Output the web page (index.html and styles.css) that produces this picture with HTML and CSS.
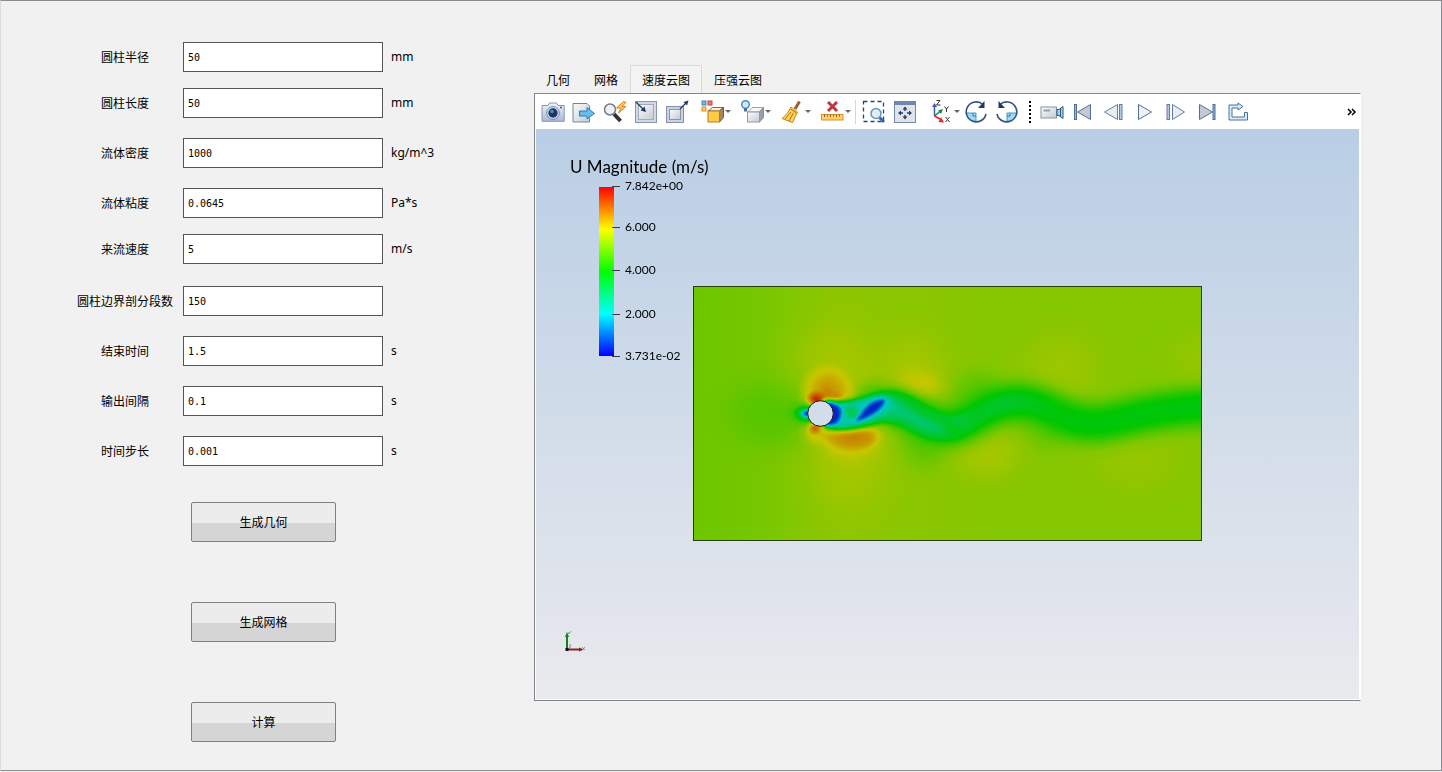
FILE: index.html
```html
<!DOCTYPE html>
<html lang="zh-CN">
<head>
<meta charset="utf-8">
<title>圆柱绕流</title>
<link rel="stylesheet" href="styles.css">
</head>
<body>
<div class="window">
  <form class="params">
    <div class="row"><label for="radius">圆柱半径</label><input id="radius" type="text" value="50"><span class="unit">mm</span></div>
    <div class="row row-near"><label for="length">圆柱长度</label><input id="length" type="text" value="50"><span class="unit">mm</span></div>
    <div class="row"><label for="density">流体密度</label><input id="density" type="text" value="1000"><span class="unit">kg/m^3</span></div>
    <div class="row"><label for="viscosity">流体粘度</label><input id="viscosity" type="text" value="0.0645"><span class="unit">Pa*s</span></div>
    <div class="row row-near"><label for="speed">来流速度</label><input id="speed" type="text" value="5"><span class="unit">m/s</span></div>
    <div class="row row-far"><label for="segments">圆柱边界剖分段数</label><input id="segments" type="text" value="150"></div>
    <div class="row"><label for="end">结束时间</label><input id="end" type="text" value="1.5"><span class="unit">s</span></div>
    <div class="row"><label for="interval">输出间隔</label><input id="interval" type="text" value="0.1"><span class="unit">s</span></div>
    <div class="row"><label for="step">时间步长</label><input id="step" type="text" value="0.001"><span class="unit">s</span></div>
    <div class="actions">
      <button type="button" class="action">生成几何</button>
      <button type="button" class="action">生成网格</button>
      <button type="button" class="action">计算</button>
    </div>
  </form>

  <main class="results">
    <div class="tabs" role="tablist">
      <button type="button" class="tab" role="tab">几何</button>
      <button type="button" class="tab" role="tab">网格</button>
      <button type="button" class="tab tab-active" role="tab" aria-selected="true">速度云图</button>
      <button type="button" class="tab" role="tab">压强云图</button>
    </div>
    <section class="panel">
      <div class="toolbar" role="toolbar">
        <button type="button" class="tool" aria-label="截图"><svg viewBox="0 0 24 24"><defs><linearGradient id="steel" x2="0" y2="1"><stop stop-color="#eef2f8"/><stop offset="1" stop-color="#a9b9d4"/></linearGradient><linearGradient id="silver" x2="1" y2="1"><stop stop-color="#fbfcfd"/><stop offset="1" stop-color="#c4cad4"/></linearGradient></defs><path d="M1 5.500H7L8.500 3H15.500L17 5.500H23.200V21.300H1Z" fill="url(#steel)" stroke="#8297bd"/><circle cx="12" cy="13" r="6.300" fill="#dce5f2" stroke="#7085ae"/><circle cx="12" cy="13" r="4.700" fill="#1c3765"/><circle cx="11" cy="11.500" r="1.700" fill="#6689bb"/><path d="M19 7.500h2" stroke="#395b94" stroke-width="1.500"/></svg></button>
        <button type="button" class="tool" aria-label="导出"><svg viewBox="0 0 24 24"><path d="M1 3.500H15L17.500 6V22H1Z" fill="url(#silver)" stroke="#7187a0"/><path d="M7.500 11H15V7.500L22.500 13.500L15 19V16H7.500Z" fill="#67bce9" stroke="#2480bc"/></svg></button>
        <button type="button" class="tool" aria-label="缩放到数据"><svg viewBox="0 0 24 24"><path d="M11 14L17.500 21" stroke="#333" stroke-width="4"/><circle cx="7" cy="9.500" r="5.500" fill="#eef1f3" stroke="#777d84" stroke-width="1.500"/><path d="M20.500 1.500L13.500 8H18L15.500 13L23 6.500H19L23 2.500Z" fill="#ffc75e" stroke="#e08119"/></svg></button>
        <button type="button" class="tool" aria-label="缩小"><svg viewBox="0 0 24 24"><rect x="1.500" y="1.500" width="21" height="21" fill="#d3d9e4" stroke="#8997b2"/><rect x="4.500" y="4.500" width="15" height="15" fill="url(#silver)" stroke="#a0abc0"/><path d="M2 2L10 10" stroke="#203965" stroke-width="1.300"/><path d="M12 12L6.500 10.500L10.500 6.500Z" fill="#203965"/></svg></button>
        <button type="button" class="tool" aria-label="放大"><svg viewBox="0 0 24 24"><rect x="1.500" y="6.500" width="17" height="16" fill="#cbd3df" stroke="#8191ad"/><rect x="4.500" y="9.500" width="11" height="10" fill="url(#silver)" stroke="#8795ad"/><path d="M15 9L22 2" stroke="#203965" stroke-width="1.300"/><path d="M23.500 .5L18.500 2L22 5.500Z" fill="#203965"/></svg></button>
        <button type="button" class="tool tool-menu tool-first" aria-label="着色"><svg viewBox="0 0 24 24"><rect x="1" y="1" width="4" height="4" fill="#73b8e5" stroke="#3e87b9"/><rect x="7" y="1" width="4" height="4" fill="#e77b75" stroke="#ca4541"/><rect x="1" y="7" width="4" height="4" fill="#ffc466" stroke="#e28a26"/><path d="M7 11L11.500 7.500H22.500L18.500 11Z" fill="#f7f0dc" stroke="#736d60"/><path d="M18.500 11L22.500 7.500V17.500L18.500 22Z" fill="#a98550" stroke="#6f5b37"/><rect x="7" y="11" width="11.500" height="11" fill="#ffcb49" stroke="#b97a13"/></svg><i class="caret"></i></button>
        <button type="button" class="tool tool-menu" aria-label="光照"><svg viewBox="0 0 24 24"><path d="M6.500 12L11 7.500H22.500L18.500 12Z" fill="#f5f6f7" stroke="#9da3ab"/><path d="M18.500 12L22.500 7.500V17.500L18.500 22Z" fill="#9ba1ab" stroke="#858b95"/><rect x="6.500" y="12" width="12" height="10" fill="url(#silver)" stroke="#9299a3"/><circle cx="4.500" cy="4.500" r="3.800" fill="#cceafb" stroke="#4389c5" stroke-width="1.400"/><path d="M4.500 8V11.500" stroke="#466c9b" stroke-width="3"/></svg><i class="caret"></i></button>
        <button type="button" class="tool tool-menu" aria-label="清除"><svg viewBox="0 0 24 24"><path d="M14 9L18.500 1.500" stroke="#a15c28" stroke-width="3"/><path d="M10 7L16.500 12L11.500 22.500L1 18.500Q7 14 10 7Z" fill="#ffd35c" stroke="#ca8717"/><path d="M9.500 9L15.500 13M4 19L10 12M8 21L12.500 13" stroke="#b96c13"/></svg><i class="caret"></i></button>
        <button type="button" class="tool tool-menu" aria-label="删除标尺"><svg viewBox="0 0 24 24"><path d="M7 2L16 11M16 2L7 11" stroke="#c1363d" stroke-width="3"/><rect x=".5" y="14.500" width="21.500" height="5.500" fill="#ffcf72" stroke="#d99129"/><path d="M3.500 14.500v2.500M6.500 14.500v2M9.500 14.500v2.500M12.500 14.500v2M15.500 14.500v2.500M18.500 14.500v2" stroke="#965c16"/></svg><i class="caret"></i></button>
        <span class="divider"></span>
        <button type="button" class="tool" aria-label="框选缩放"><svg viewBox="0 0 24 24"><rect x="1.500" y="1.500" width="20" height="20" fill="none" stroke="#28466f" stroke-width="1.300" stroke-dasharray="4 3"/><path d="M17.500 17.500L22 22" stroke="#2b6ba8" stroke-width="3"/><circle cx="14" cy="13.500" r="5" fill="#ddecf5" stroke="#6895b8" stroke-width="1.500"/></svg></button>
        <button type="button" class="tool" aria-label="适应窗口"><svg viewBox="0 0 24 24"><rect x="1.500" y="1.500" width="21" height="21" fill="#dfe3ea" stroke="#7889a7"/><path d="M1 1H23V5H1Z" fill="#7286a9"/><path d="M12 8V11M12 15V18M7 13H10M14 13H17" stroke="#233f6a" stroke-width="1.400"/><path d="M12 6.500L9.500 9.500H14.500ZM12 19.500L9.500 16.500H14.500ZM5 13L8 10.500V15.500ZM19 13L16 10.500V15.500Z" fill="#233f6a"/></svg></button>
        <button type="button" class="tool tool-menu tool-axes" aria-label="视角"><svg viewBox="0 0 24 24"><path d="M4.500 16V6" stroke="#3b5baf" stroke-width="1.500"/><path d="M4.500 3L2 7H7Z" fill="#3b5baf"/><path d="M4.500 16L10 11.500" stroke="#188442" stroke-width="1.500"/><path d="M13 9L8 10.500L11 14Z" fill="#188442"/><path d="M4.500 16L10 19" stroke="#e82026" stroke-width="1.500"/><path d="M14 22.500L8.500 22L11 17Z" fill="#f0212b"/><path d="M6.500 .5H10L6.500 5H10.500M14.500 6.500L16.500 9L18.500 6.500M16.500 9V12M15.500 17L19.500 22M19.500 17L15.500 22" fill="none" stroke="#333"/></svg><i class="caret"></i></button>
        <button type="button" class="tool" aria-label="顺时针旋转"><svg viewBox="0 0 24 24"><path d="M2 13H12V22.500A10 10 0 0 1 2 13Z" fill="#9ed8f5"/><path d="M2 13H12V22" fill="none" stroke="#4299cc"/><path d="M19 4.500A10 10 0 1 0 22 14" fill="none" stroke="#365278" stroke-width="1.600"/><path d="M20.500 1V8H14Z" fill="#183b6b"/><path d="M9 13V16H12" fill="none" stroke="#327fa7"/></svg></button>
        <button type="button" class="tool" aria-label="逆时针旋转"><svg viewBox="0 0 24 24"><path d="M22 13H12V22.500A10 10 0 0 0 22 13Z" fill="#9ed8f5"/><path d="M22 13H12V22" fill="none" stroke="#4299cc"/><path d="M5 4.500A10 10 0 1 1 2 14" fill="none" stroke="#365278" stroke-width="1.600"/><path d="M3.500 1V8H10Z" fill="#183b6b"/><path d="M15 13V16H12" fill="none" stroke="#327fa7"/></svg></button>
        <span class="grip"></span>
        <button type="button" class="tool" aria-label="保存动画"><svg viewBox="0 0 24 24"><rect x="1" y="7" width="15.500" height="11" fill="url(#silver)" stroke="#8a93a3"/><path d="M3.500 10.500H10" stroke="#9aa1ad" stroke-width="2"/><path d="M17 9.500H19L23 6.500V18.500L19 15.500H17Z" fill="#a3d5ed" stroke="#315780"/><path d="M20.500 8V17" stroke="#315780"/></svg></button>
        <button type="button" class="tool" aria-label="第一帧"><svg viewBox="0 0 24 24"><rect x="3.500" y="4.500" width="2" height="15" fill="#9fb1cd" stroke="#526f9b"/><path d="M19.500 4.500V19.500L6.500 12Z" fill="#c4c9d1" stroke="#526f9b"/></svg></button>
        <button type="button" class="tool" aria-label="上一帧"><svg viewBox="0 0 24 24"><path d="M15.500 4.500V19.500L2.500 12Z" fill="#e9edf3" stroke="#647da6"/><rect x="17.500" y="4.500" width="2.500" height="15" fill="#b7c7dc" stroke="#647da6"/></svg></button>
        <button type="button" class="tool" aria-label="播放"><svg viewBox="0 0 24 24"><path d="M5.500 4.500L18.500 12L5.500 19.500Z" fill="#edf0f5" stroke="#526f9b"/></svg></button>
        <button type="button" class="tool" aria-label="下一帧"><svg viewBox="0 0 24 24"><rect x="3" y="4.500" width="2.500" height="15" fill="#b7c7dc" stroke="#647da6"/><path d="M8.500 4.500L20.500 12L8.500 19.500Z" fill="#e9edf3" stroke="#647da6"/></svg></button>
        <button type="button" class="tool" aria-label="最后一帧"><svg viewBox="0 0 24 24"><path d="M4.500 4.500L17.500 12L4.500 19.500Z" fill="#c4c9d1" stroke="#526f9b"/><rect x="18" y="4.500" width="2" height="15" fill="#9fb1cd" stroke="#526f9b"/></svg></button>
        <button type="button" class="tool" aria-label="循环"><svg viewBox="0 0 24 24"><path d="M12 3L17 6.500L12 10V8H6V17H18.500V12.500H21.500V20H3V5H12Z" fill="#d5eef9" stroke="#506f96"/></svg></button>
        <button type="button" class="more" aria-label="更多"><svg viewBox="0 0 10 8"><path d="M1 1L4 4L1 7M5 1L8 4L5 7" fill="none" stroke="#000" stroke-width="1.500"/></svg></button>
      </div>
      <div class="viewport">
        <svg class="scene" viewBox="0 0 823 570" role="img" aria-label="U Magnitude">
          <defs>
            <linearGradient id="legend" x2="0" y2="1"><stop stop-color="#f00"/><stop offset=".25" stop-color="#ff0"/><stop offset=".5" stop-color="#0f0"/><stop offset=".75" stop-color="#0ff"/><stop offset="1" stop-color="#00f"/></linearGradient>
            <linearGradient id="stream"><stop stop-color="#a2a2a2"/><stop offset=".1" stop-color="#a4a4a4"/><stop offset=".28" stop-color="#acacac"/><stop offset=".42" stop-color="#acacac"/><stop offset=".58" stop-color="#aaa"/><stop offset="1" stop-color="#aaa"/></linearGradient>
            <radialGradient id="g180"><stop stop-color="#b5b5b5"/><stop offset=".35" stop-color="#b5b5b5" stop-opacity=".7"/><stop offset=".7" stop-color="#b5b5b5" stop-opacity=".2"/><stop offset="1" stop-color="#b5b5b5" stop-opacity="0"/></radialGradient>
            <radialGradient id="g195"><stop stop-color="#c3c3c3"/><stop offset=".35" stop-color="#c3c3c3" stop-opacity=".75"/><stop offset=".7" stop-color="#c3c3c3" stop-opacity=".2"/><stop offset="1" stop-color="#c3c3c3" stop-opacity="0"/></radialGradient>
            <radialGradient id="g215"><stop stop-color="#d6d6d6"/><stop offset=".5" stop-color="#d6d6d6" stop-opacity=".6"/><stop offset="1" stop-color="#d6d6d6" stop-opacity="0"/></radialGradient>
            <radialGradient id="g250"><stop stop-color="#fff"/><stop offset=".45" stop-color="#f4f4f4" stop-opacity=".65"/><stop offset="1" stop-color="#eee" stop-opacity="0"/></radialGradient>
            <radialGradient id="g128"><stop stop-color="#808080"/><stop offset=".35" stop-color="#808080" stop-opacity=".7"/><stop offset=".7" stop-color="#808080" stop-opacity=".2"/><stop offset="1" stop-color="#808080" stop-opacity="0"/></radialGradient>
            <radialGradient id="g0"><stop stop-color="#000"/><stop offset=".3" stop-color="#222" stop-opacity=".75"/><stop offset=".65" stop-color="#444" stop-opacity=".3"/><stop offset="1" stop-color="#555" stop-opacity="0"/></radialGradient>
            <linearGradient id="core" gradientUnits="userSpaceOnUse" x1="450" x2="1543" y1="0" y2="0"><stop stop-color="#484848"/><stop offset=".14" stop-color="#4c4c4c"/><stop offset=".2" stop-color="#5b5b5b"/><stop offset=".29" stop-color="#5c5c5c"/><stop offset=".38" stop-color="#757575"/><stop offset=".48" stop-color="#727272"/><stop offset=".6" stop-color="#7d7d7d"/><stop offset="1" stop-color="#7c7c7c"/></linearGradient>
            <filter id="b2" filterUnits="userSpaceOnUse" x="-100" y="0" width="1800" height="860"><feGaussianBlur stdDeviation="4"/></filter>
            <filter id="b6" filterUnits="userSpaceOnUse" x="-100" y="0" width="1800" height="860"><feGaussianBlur stdDeviation="7"/></filter>
            <filter id="b14" filterUnits="userSpaceOnUse" x="-100" y="0" width="1800" height="860"><feGaussianBlur stdDeviation="14"/></filter>
            <filter id="b26" filterUnits="userSpaceOnUse" x="-100" y="0" width="1800" height="860"><feGaussianBlur stdDeviation="23"/></filter>
            <filter id="rainbow" filterUnits="userSpaceOnUse" x="38" y="48" width="1506" height="764" color-interpolation-filters="sRGB"><feComponentTransfer><feFuncR type="table" tableValues="0 0 0 .784 .784"/><feFuncG type="table" tableValues="0 .784 .784 .784 0"/><feFuncB type="table" tableValues=".784 .784 0 0 0"/></feComponentTransfer></filter>
          </defs>

          <svg x="157" y="157" width="509" height="255" viewBox="38 48 1506 764" preserveAspectRatio="none">
            <g filter="url(#rainbow)">
              <rect x="38" y="48" width="1506" height="764" fill="url(#stream)"/>
              <ellipse cx="460" cy="310" rx="210" ry="260" fill="url(#g180)"/>
              <ellipse cx="500" cy="560" rx="200" ry="270" fill="url(#g180)"/>
              <ellipse cx="690" cy="310" rx="160" ry="190" fill="url(#g180)"/>
              <ellipse cx="290" cy="430" rx="230" ry="170" fill="url(#g128)" opacity=".35"/>
              <ellipse cx="720" cy="520" rx="120" ry="130" fill="url(#g128)" opacity=".35"/>
              <ellipse cx="565" cy="370" rx="70" ry="60" fill="url(#g128)" opacity=".45"/>
              <ellipse cx="870" cy="360" rx="120" ry="100" fill="url(#g128)" opacity=".3"/>
              <ellipse cx="1080" cy="490" rx="120" ry="90" fill="url(#g128)" opacity=".2"/>
              <ellipse cx="910" cy="550" rx="160" ry="130" fill="url(#g180)"/>
              <ellipse cx="1130" cy="290" rx="190" ry="170" fill="url(#g180)" opacity=".7"/>
              <ellipse cx="1350" cy="570" rx="220" ry="160" fill="url(#g180)" opacity=".5"/>
              <ellipse cx="1543" cy="260" rx="180" ry="140" fill="url(#g180)" opacity=".5"/>
              <ellipse cx="700" cy="350" rx="110" ry="70" fill="url(#g195)"/>
              <ellipse cx="435" cy="370" rx="90" ry="95" fill="url(#g215)"/>
              <ellipse cx="505" cy="500" rx="130" ry="100" fill="url(#g195)"/>
              <ellipse cx="400" cy="485" rx="55" ry="55" fill="url(#g195)"/>
              <path d="M400 470C420 485 560 475 585 490C575 535 530 548 490 543C445 533 420 515 400 470Z" fill="#c8c8c8" filter="url(#b14)"/>
              <ellipse cx="515" cy="500" rx="85" ry="42" fill="url(#g215)"/>
              <path d="M600 405C680 405 730 475 800 470C870 460 900 395 1000 397C1080 395 1120 455 1220 460C1310 460 1370 408 1650 408" fill="none" stroke="#848484" stroke-width="112" filter="url(#b26)"/>
              <path d="M600 410C680 410 730 475 800 472C870 462 900 400 1000 395C1080 394 1120 457 1220 460C1310 460 1370 407 1650 407" fill="none" stroke="url(#core)" stroke-width="62" filter="url(#b14)"/>
              <path d="M386 398Q410 368 470 370L480 386L430 400Z" fill="#dadada" filter="url(#b6)"/>
              <ellipse cx="402" cy="392" rx="36" ry="34" fill="url(#g250)"/>
              <ellipse cx="398" cy="472" rx="26" ry="24" fill="url(#g250)" opacity=".6"/>
              <path d="M425 390C480 404 540 386 580 370C640 358 680 372 720 404C760 430 790 450 845 470C840 508 770 514 715 497C670 475 650 450 600 456C550 470 500 486 430 472Z" fill="#787878" filter="url(#b6)"/>
              <path d="M430 394C480 412 530 392 580 377C625 370 650 395 690 425C720 445 760 458 790 476C780 494 740 488 705 471C665 450 640 433 600 442C550 456 500 476 435 467Z" fill="#565656" filter="url(#b14)"/>
              <path d="M430 394C480 412 530 392 575 380C600 376 625 380 630 400C620 425 590 440 550 452C520 464 480 474 435 467Z" fill="#464646" filter="url(#b6)"/>
              <path d="M435 395C460 400 470 405 478 425C468 445 480 462 430 466Z" fill="#0c0c0c" filter="url(#b2)"/>
              <ellipse cx="507" cy="425" rx="18" ry="20" fill="#666" filter="url(#b6)"/>
              <path d="M515 456C548 425 545 393 605 387C611 402 575 440 515 456Z" fill="#101010" filter="url(#b2)"/>
              <ellipse cx="372" cy="430" rx="70" ry="50" fill="url(#g128)"/>
              <ellipse cx="376" cy="430" rx="42" ry="28" fill="url(#g0)"/>
            </g>
          </svg>
          <rect x="157.500" y="157.500" width="508" height="254" fill="none" stroke="#263e0c"/>
          <circle cx="284.500" cy="284.500" r="12.800" fill="#d1dde9" stroke="#151515"/>

          <text class="scene-title" x="34" y="44">U Magnitude (m/s)</text>
          <rect x="63" y="58" width="15" height="169" fill="url(#legend)"/>
          <path d="M76 57.500h8M76 98.500h8M76 141.500h8M76 185.500h8M76 227.500h8" stroke="#333c44"/>
          <g class="scene-ticks">
            <text x="89" y="61">7.842e+00</text>
            <text x="89" y="102">6.000</text>
            <text x="89" y="145">4.000</text>
            <text x="89" y="189">2.000</text>
            <text x="89" y="231">3.731e-02</text>
          </g>
          <path d="M31 520V507" stroke="#18801b" stroke-width="2"/><path d="M31 503L29 508H33Z" fill="#18801b"/>
          <path d="M31 520.500H44" stroke="#8c2424" stroke-width="2"/><path d="M48 520.500L43 518.500V522.500Z" fill="#8c2424"/>
          <rect x="29.500" y="519" width="3" height="3" fill="#0a0a3c"/>
          <path d="M32 503l1 2l2-3M46 518l3 3M49 518l-3 3M33 516h2l-2 3h2" fill="none" stroke="#777" stroke-width=".7"/>
        </svg>
      </div>
    </section>
  </main>
</div>
</body>
</html>
```
FILE: styles.css
```css
* { box-sizing: border-box; }

body {
  margin: 0;
  background: #f1f1f1;
  color: #000;
  font: 12px/16px "Noto Sans", "Noto Sans CJK SC", sans-serif;
}

button, input { font: inherit; color: inherit; }

.window {
  display: flex;
  min-height: calc(100vh - 1px);
  border: 1px solid #8b8b94;
  border-left-color: #dcdcdc;
}

/* Parameter form */
.params {
  flex: 0 0 533px;
  padding: 41px 0 28px 66px;
}

.row {
  display: grid;
  grid-template-columns: 116px 200px 1fr;
  align-items: center;
  margin-top: 20px;
}
.row:first-child { margin-top: 0; }
.row-near { margin-top: 16px; }
.row-far { margin-top: 22px; }

.row label {
  text-align: center;
  white-space: nowrap;
  font-family: "Noto Sans CJK SC", sans-serif;
}

.row input {
  width: 100%;
  height: 30px;
  padding: 0 4px;
  border: 1px solid #555;
  background: #fff;
  font: 10px/16px "DejaVu Sans Mono", monospace;
}

.unit { padding-left: 8px; }

.actions {
  display: flex;
  flex-direction: column;
  gap: 60px;
  width: 145px;
  margin: 36px 0 0 124px;
}

.action {
  height: 40px;
  padding: 0;
  border: 1px solid #808080;
  border-radius: 2px;
  background: linear-gradient(#ececec 0 52%, #d5d5d5 52% 100%);
  font-family: "Noto Sans CJK SC", sans-serif;
}

/* Result tabs */
.results {
  flex: 1;
  display: flex;
  flex-direction: column;
  min-width: 0;
  padding: 64px 80px 69px 0;
}

.tabs { display: flex; }

.tab {
  height: 28px;
  padding: 2px 12px 0;
  border: 0;
  background: none;
  font-family: "Noto Sans CJK SC", sans-serif;
}

.tab-active {
  padding: 1px 11px 0;
  border: 1px solid #d9d9d9;
  border-bottom: 0;
  background: #f3f3f3;
}

.panel {
  flex: 1;
  display: flex;
  flex-direction: column;
  border: 1px solid #83838c;
  border-right-color: #fff;
  background: #fff;
  padding: 0 1px 1px;
}

.toolbar {
  display: flex;
  align-items: center;
  height: 35px;
  padding: 0 2px 0 1px;
}

.tool {
  display: flex;
  align-items: center;
  justify-content: center;
  flex: 0 0 31px;
  height: 31px;
  padding: 0;
  border: 0;
  background: none;
}
.tool svg { flex: none; width: 24px; height: 24px; }

.tool-menu {
  flex-basis: 40px;
  justify-content: flex-start;
  padding-left: 7px;
}
.tool-first { margin-left: 2px; }
.tool-axes { flex-basis: 37px; margin-left: 3px; }

.caret {
  width: 5px;
  border: solid transparent;
  border-width: 3px 3px 0;
  border-top-color: #666;
}

.divider {
  width: 1px;
  height: 24px;
  margin: 0 2px 0 1px;
  background: #d5d5d5;
}

.grip {
  width: 2px;
  height: 22px;
  margin: 0 5px 0 7px;
  background: repeating-linear-gradient(#000 0 2px, transparent 2px 4px);
}

.more {
  margin-left: auto;
  padding: 0;
  border: 0;
  background: none;
  line-height: 0;
}
.more svg { width: 10px; height: 8px; }

/* Render view */
.viewport {
  flex: 1;
  display: flex;
  background: linear-gradient(#b9cee5, #e9eaed);
}

.scene {
  flex: 1;
  min-width: 0;
  font-family: Lato, sans-serif;
  fill: #000;
}
.scene-title { font-size: 17px; }
.scene-ticks { font-size: 12px; }
```
